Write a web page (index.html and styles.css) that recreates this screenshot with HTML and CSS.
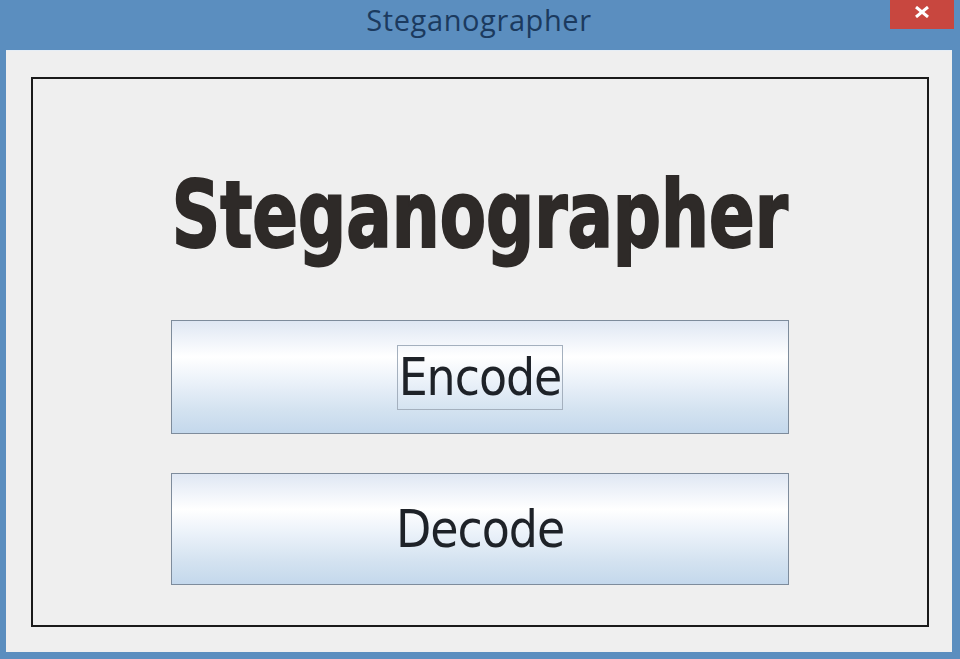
FILE: index.html
```html
<!DOCTYPE html>
<html>
<head>
<meta charset="utf-8">
<link rel="stylesheet" href="styles.css">
</head>
<body>
<div class="window">
  <div class="titlebar">
    <span class="wtitle">Steganographer</span>
    <button class="close" aria-label="Close">
      <svg width="16" height="12" viewBox="0 0 16 12"><path d="M2 1 L14 11 M14 1 L2 11" stroke="#fff" stroke-width="3" stroke-linecap="butt"/></svg>
    </button>
  </div>
  <div class="client">
    <div class="panel">
      <div class="heading"><span class="heading-text">Steganographer</span></div>
      <button class="btn"><span class="focus">Encode</span></button>
      <button class="btn btn2"><span class="label">Decode</span></button>
    </div>
  </div>
</div>
</body>
</html>
```
FILE: styles.css
```css
html, body {
  margin: 0;
  padding: 0;
  width: 960px;
  height: 659px;
  overflow: hidden;
  background: #5b8ebf;
}
.window {
  width: 960px;
  height: 659px;
  display: flex;
  flex-direction: column;
  background: #5b8ebf;
}
.titlebar {
  height: 50px;
  flex: none;
  position: relative;
  display: flex;
  justify-content: center;
  align-items: flex-start;
}
.wtitle {
  font-family: "Open Sans", "Noto Sans", sans-serif;
  font-size: 29px;
  color: #1b3a5e;
  line-height: 40px;
  letter-spacing: 0.6px;
  margin-left: -2px;
}
.close {
  position: absolute;
  left: 890px;
  top: 0;
  width: 64px;
  height: 29px;
  border: none;
  padding: 6px 0 0;
  background: #c8473f;
  display: flex;
  align-items: flex-start;
  justify-content: center;
}
.client {
  flex: 1;
  margin: 0 8px 7px 6px;
  background: #efefef;
  border-top: 1px solid #e6eef6;
  padding: 26px 23px 25px 25px;
  display: flex;
}
.panel {
  flex: 1;
  border: 2px solid #1a1a1a;
  display: flex;
  flex-direction: column;
  align-items: center;
}
.heading {
  height: 241px;
  width: 100%;
  display: flex;
  justify-content: center;
}
.heading-text {
  display: inline-block;
  font-family: "DejaVu Sans Condensed", "DejaVu Sans", sans-serif;
  font-weight: bold;
  font-size: 93px;
  line-height: 93px;
  color: #2e2a28;
  -webkit-text-stroke: 2px #2e2a28;
  margin-top: 90px;
  transform: scaleX(0.805);
  white-space: nowrap;
}
.btn {
  width: 618px;
  height: 114px;
  flex: none;
  border: 1px solid #7e8c9c;
  padding: 0;
  margin: 0;
  background: linear-gradient(to bottom, #dfe7f3 0%, #f3f6fb 20%, #ffffff 32%, #eaf1f9 55%, #d3e2f0 80%, #c4d8ec 100%);
  display: flex;
  align-items: center;
  justify-content: center;
  font-family: "DejaVu Sans Condensed", "DejaVu Sans", sans-serif;
  font-size: 51px;
  color: #1e2228;
}
.btn2 {
  margin-top: 39px;
  height: 112px;
}
.focus {
  display: inline-block;
  border: 1px solid #a4b0be;
  padding: 0 1px;
  line-height: 63px;
  letter-spacing: -1px;
}
.label {
  letter-spacing: -1px;
  line-height: 63px;
}
```
